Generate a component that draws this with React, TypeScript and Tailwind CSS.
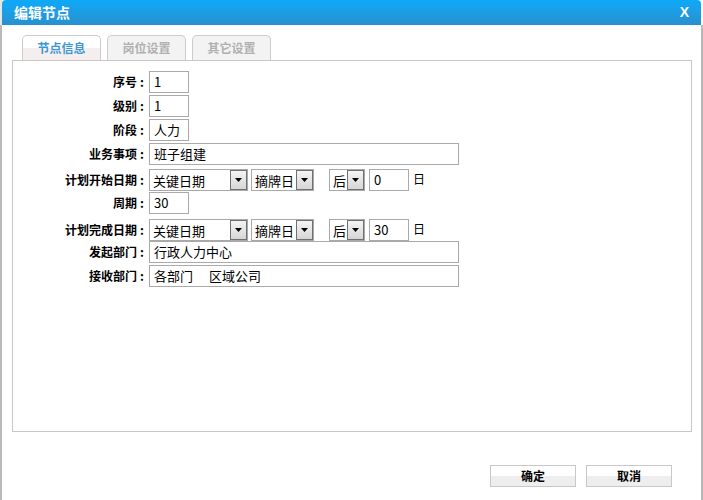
import React from 'react';

const FONT = { fontFamily: '"Microsoft YaHei", "Noto Sans CJK SC", sans-serif' };

// 下拉按钮
const Arrow: React.FC = () => (
  <div className="h-[20px] w-[17px] border border-[#707070] bg-gradient-to-b from-[#f4f4f4] to-[#d6d6d6] flex items-center justify-center">
    <svg width="7" height="4" viewBox="0 0 7 4">
      <polygon points="0,0 7,0 3.5,4" fill="#000" />
    </svg>
  </div>
);

const Select: React.FC<{ text: string; width: string }> = ({ text, width }) => (
  <div className={`${width} h-[22px] border border-[#a9a9a9] bg-white flex items-center justify-between`}>
    <span className="pl-[3px] text-[13px] leading-none text-black whitespace-nowrap">{text}</span>
    <Arrow />
  </div>
);

const Input: React.FC<{ value: string; width: string }> = ({ value, width }) => (
  <div className={`${width} h-[22px] border border-[#aaaaaa] bg-white flex items-center pl-[4px] text-[13px] text-black whitespace-pre`}>
    {value}
  </div>
);

const Row: React.FC<{ label: string; mt: string; children: React.ReactNode }> = ({ label, mt, children }) => (
  <div className={`flex items-center ${mt}`}>
    <div className="w-[136px] flex justify-end text-[12px] font-bold text-black whitespace-nowrap">
      <span>{label}</span>
      <span className="ml-[3px] mr-[5px]">:</span>
    </div>
    {children}
  </div>
);

const DateRow: React.FC<{ days: string }> = ({ days }) => (
  <div className="flex items-center">
    <Select text="关键日期" width="w-[99px]" />
    <div className="ml-[3px]">
      <Select text="摘牌日" width="w-[63px]" />
    </div>
    <div className="ml-[15px]">
      <Select text="后" width="w-[36px]" />
    </div>
    <div className="ml-[4px]">
      <Input value={days} width="w-[40px]" />
    </div>
    <span className="ml-[4px] -mt-[2px] text-[12px] text-black">日</span>
  </div>
);

const Tab: React.FC<{ label: string; active?: boolean }> = ({ label, active }) => (
  <div
    className={`w-[79px] h-[25px] rounded-t-[5px] border border-b-0 border-[#cccccc] flex items-center justify-center text-[12px] font-bold ${
      active
        ? 'bg-gradient-to-b from-white from-50% to-[#f4eeee] to-50% text-[#3b97d8]'
        : 'bg-[#f3f3f3] text-[#b0b0b0]'
    }`}
  >
    {label}
  </div>
);

const Btn: React.FC<{ label: string }> = ({ label }) => (
  <div className="w-[86px] h-[22px] border border-[#c8c8c8] bg-gradient-to-b from-white from-50% to-[#eeeeee] to-50% flex items-center justify-center text-[12px] font-bold text-black">
    {label}
  </div>
);

const App: React.FC = () => {
  return (
    <div className="w-[703px] h-[500px] flex bg-white overflow-hidden" style={FONT}>
      {/* 背景页面边缘 */}
      <div className="w-[2px] h-full flex flex-col">
        <div className="h-[25px] bg-[#e6e6e6]" />
        <div className="flex-1 bg-[#b9b9b9]" />
      </div>

      {/* 对话框 */}
      <div className="flex-1 flex flex-col bg-white">
        {/* 标题栏 */}
        <div className="h-[25px] rounded-t-[4px] bg-gradient-to-b from-[#0aaaf8] to-[#2690cf] flex items-center justify-between pl-[12px] pr-[12px]">
          <span className="text-[14px] font-bold text-white">编辑节点</span>
          <span className="text-[14px] font-bold text-white" style={{ fontFamily: '"Liberation Sans", sans-serif' }}>
            X
          </span>
        </div>

        {/* 标签页 */}
        <div className="flex gap-[6px] ml-[20px] mt-[10px]">
          <Tab label="节点信息" active />
          <Tab label="岗位设置" />
          <Tab label="其它设置" />
        </div>

        {/* 内容面板 */}
        <div className="ml-[10px] w-[680px] h-[372px] border border-[#c8c8c8] pt-[10px]">
          <Row label="序号" mt="mt-0">
            <Input value="1" width="w-[40px]" />
          </Row>
          <Row label="级别" mt="mt-[2px]">
            <Input value="1" width="w-[40px]" />
          </Row>
          <Row label="阶段" mt="mt-[2px]">
            <Input value="人力" width="w-[40px]" />
          </Row>
          <Row label="业务事项" mt="mt-[2px]">
            <Input value="班子组建" width="w-[310px]" />
          </Row>
          <Row label="计划开始日期" mt="mt-[4px]">
            <DateRow days="0" />
          </Row>
          <Row label="周期" mt="mt-[1px]">
            <Input value="30" width="w-[40px]" />
          </Row>
          <Row label="计划完成日期" mt="mt-[5px]">
            <DateRow days="30" />
          </Row>
          <Row label="发起部门" mt="mt-0">
            <Input value="行政人力中心" width="w-[310px]" />
          </Row>
          <Row label="接收部门" mt="mt-[2px]">
            <Input value={'各部门\u3000 区域公司'} width="w-[310px]" />
          </Row>
        </div>

        {/* 按钮 */}
        <div className="flex justify-end gap-[10px] mt-[33px] mr-[29px]">
          <Btn label="确定" />
          <Btn label="取消" />
        </div>
      </div>

      <div className="w-[2px] h-full flex flex-col">
        <div className="h-[25px] bg-white" />
        <div className="flex-1 bg-[#b9b9b9]" />
      </div>
    </div>
  );
};

export default App;
